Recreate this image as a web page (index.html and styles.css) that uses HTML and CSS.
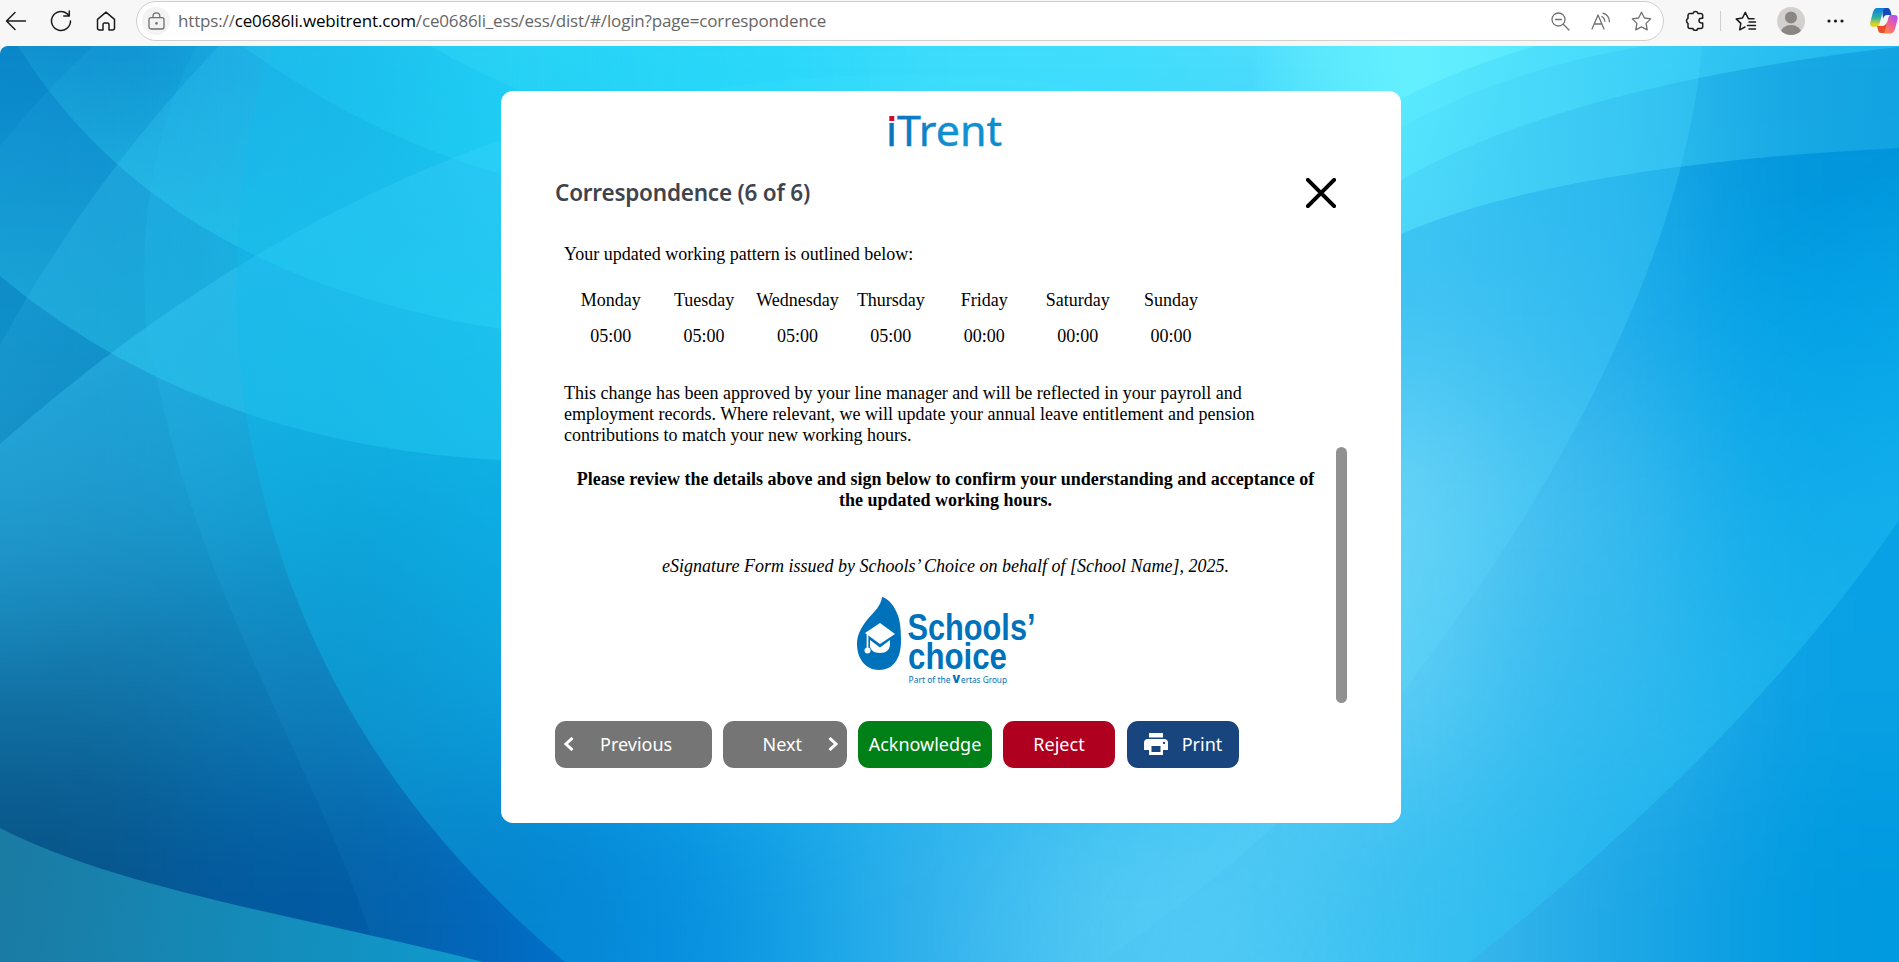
FILE: index.html
```html
<!DOCTYPE html>
<html lang="en">
<head>
<meta charset="utf-8">
<title>iTrent - Correspondence</title>
<link rel="stylesheet" href="styles.css">
</head>
<body>
<header class="toolbar">
  <nav class="nav-icons">
    <svg class="ico back" width="22" height="20" viewBox="0 0 22 20"><path d="M20.500 10H1.500M10 1.500L1.500 10l8.500 8.500"/></svg>
    <svg class="ico reload" width="22" height="22" viewBox="0 0 22 22"><path d="M20.500 11a9.500 9.500 0 1 1-3.500-7.400l2.300 2.200M19.300 1v5h-5.500"/></svg>
    <svg class="ico home" width="20" height="20" viewBox="0 0 20 20"><path d="M1.500 8.300L10 1.200l8.500 7.100V17a2 2 0 0 1-2 2H13v-5.500a1.500 1.500 0 0 0-1.500-1.500h-3A1.500 1.500 0 0 0 7 13.500V19H3.500a2 2 0 0 1-2-2z"/></svg>
  </nav>
  <div class="address">
    <span class="lock">
      <svg class="ico grey" width="17" height="18" viewBox="0 0 17 18"><rect x="1" y="5.700" width="15" height="11.300" rx="2"/><path d="M5 5.500V4.200a3.400 3.400 0 0 1 6.800 0v1.300"/><circle cx="8.500" cy="11.300" r=".7" fill="#666"/></svg>
    </span>
    <span class="url">https://<b>ce0686li.webitrent.com</b>/ce0686li_ess/ess/dist/#/login?page=correspondence</span>
    <span class="address-tools">
      <svg class="ico grey" width="19" height="19" viewBox="0 0 19 19"><circle cx="7.500" cy="7.500" r="6.500"/><path d="M12.300 12.300l5.700 5.700M4.500 7.500h6"/></svg>
      <svg class="ico grey" width="20" height="18" viewBox="0 0 20 18"><path d="M1 17L7 3l6 14M3.200 12h7.600M11 4.500c1.800 1 2.700 2.700 2.900 4.700M12 1.200c4 1.200 6.200 4.200 6.500 8.500"/></svg>
      <svg class="ico grey" width="21" height="20" viewBox="0 0 21 20"><path d="M10.500 1.200l2.900 5.800 6.300.9-4.600 4.500 1.100 6.400-5.700-3-5.700 3 1.100-6.400L1.300 7.900 7.600 7z"/></svg>
    </span>
  </div>
  <div class="actions">
    <svg class="ico puzzle" width="20" height="21" viewBox="0 0 20 21"><path d="M5 3.500h3a2.600 2.600 0 0 1 5 0h2.700a2 2 0 0 1 2 2v2.800h-1.400a2.200 2.200 0 0 0 0 4.600h1.400v3.600a2 2 0 0 1-2 2h-2.900a2.500 2.500 0 0 1-4.900 0H5a2 2 0 0 1-2-2v-3.200a2.800 2.800 0 0 1 0-5V5.500a2 2 0 0 1 2-2z"/></svg>
    <span class="divider"></span>
    <svg class="ico favs" width="22" height="20" viewBox="0 0 22 20"><path d="M19 7.800h-5.500L10.300 1.300 7.500 7l-6.300.9 4.600 4.500-1.100 6.400 5.300-2.800M14 11h6.500M12.500 14.500h8M14 18h6.500"/></svg>
    <svg class="avatar" width="28" height="28" viewBox="0 0 28 28"><defs><clipPath id="av"><circle cx="14" cy="14" r="14"/></clipPath></defs><g clip-path="url(#av)"><path fill="#d2d0ce" d="M0 0h28v28H0z"/><circle cx="14" cy="10.500" r="6" fill="#8a8684"/><ellipse cx="14" cy="25.500" rx="10" ry="7.500" fill="#8a8684"/></g></svg>
    <svg class="dots" width="17" height="4" viewBox="0 0 17 4"><circle cx="2" cy="2" r="1.600"/><circle cx="8.500" cy="2" r="1.600"/><circle cx="15" cy="2" r="1.600"/></svg>
    <svg class="copilot" width="28" height="26" viewBox="0 0 28 26">
      <defs>
        <linearGradient id="cp1" x1="0" y1="0" x2="0" y2="1"><stop offset="0" stop-color="#0a7fe0"/><stop offset=".5" stop-color="#2ab0a8"/><stop offset=".85" stop-color="#e0d020"/></linearGradient>
        <linearGradient id="cp2" x1=".8" y1="0" x2=".2" y2="1"><stop offset="0" stop-color="#b050f0"/><stop offset=".5" stop-color="#f0609a"/><stop offset="1" stop-color="#ff8a40"/></linearGradient>
      </defs>
      <path fill="#1848c0" d="M12 0h5.500c2 0 2.500 1.500 3 3l1 4h-4c-3 0-4 2-4.500 4z"/>
      <path fill="#e8502c" d="M7 18h5c3 0 4-2 4.500-4l1 6-2 5H11c-2 0-2.600-1.500-3-3z"/>
      <path fill="url(#cp1)" d="M7 0h8c-1.500 1-2 2.600-2.500 4.500L9.800 15c-.6 2.500-2 3.800-4.500 3.800H3C.6 18.800-.2 17 .3 14.500L2.700 5C3.700 1.500 5 0 7 0z"/>
      <path fill="url(#cp2)" d="M20 7h4.500c2.800 0 3.700 1.800 3 4.500L25.300 20c-1 3.600-2.500 5.500-5.300 5.500h-7c1.500-1 2-2.500 2.400-4.300L18 11c.5-2 1-3 2-4z"/>
    </svg>
  </div>
</header>

<main class="stage">
  <svg class="backdrop" viewBox="0 46 1899 916" preserveAspectRatio="none">
    <defs>
      <filter id="soft" x="-10%" y="-10%" width="120%" height="120%" color-interpolation-filters="sRGB"><feGaussianBlur stdDeviation="70"/></filter>
      <linearGradient id="gC" gradientUnits="userSpaceOnUse" x1="40" y1="90" x2="200" y2="300"><stop offset="0" stop-color="#30b8f0" stop-opacity=".12"/><stop offset="1" stop-color="#30b8f0" stop-opacity="0"/></linearGradient>
      <linearGradient id="gF" gradientUnits="userSpaceOnUse" x1="243" y1="0" x2="880" y2="0"><stop offset="0" stop-color="#30e8ff" stop-opacity=".2"/><stop offset=".4" stop-color="#30e8ff" stop-opacity=".28"/><stop offset="1" stop-color="#30e8ff" stop-opacity="0"/></linearGradient>
      <linearGradient id="gG" gradientUnits="userSpaceOnUse" x1="430" y1="0" x2="880" y2="0"><stop offset="0" stop-color="#50f0ff" stop-opacity=".2"/><stop offset="1" stop-color="#50f0ff" stop-opacity="0"/></linearGradient>
      <linearGradient id="gA" gradientUnits="userSpaceOnUse" x1="200" y1="250" x2="330" y2="560"><stop offset="0" stop-color="#4ad4ff" stop-opacity=".38"/><stop offset="1" stop-color="#2cc4f4" stop-opacity="0"/></linearGradient>
      <linearGradient id="gB" gradientUnits="userSpaceOnUse" x1="110" y1="170" x2="210" y2="330"><stop offset="0" stop-color="#4ad4ff" stop-opacity=".2"/><stop offset="1" stop-color="#4ad4ff" stop-opacity="0"/></linearGradient>
      <linearGradient id="gE" gradientUnits="userSpaceOnUse" x1="300" y1="440" x2="360" y2="100"><stop offset="0" stop-color="#38e4fc" stop-opacity=".34"/><stop offset="1" stop-color="#40e0ff" stop-opacity="0"/></linearGradient>
      <linearGradient id="gD" gradientUnits="userSpaceOnUse" x1="300" y1="275" x2="370" y2="60"><stop offset="0" stop-color="#38ecff" stop-opacity=".28"/><stop offset="1" stop-color="#40e4ff" stop-opacity="0"/></linearGradient>
      <linearGradient id="gH" gradientUnits="userSpaceOnUse" x1="150" y1="0" x2="800" y2="0"><stop offset="0" stop-color="#28c0f0" stop-opacity=".2"/><stop offset=".3" stop-color="#1c9cdc" stop-opacity=".1"/><stop offset="1" stop-color="#1c9ce4" stop-opacity="0"/></linearGradient>
      <linearGradient id="gI" gradientUnits="userSpaceOnUse" x1="240" y1="650" x2="800" y2="420"><stop offset="0" stop-color="#0cb8ec" stop-opacity=".45"/><stop offset="1" stop-color="#10c4f4" stop-opacity="0"/></linearGradient>
      <linearGradient id="gJ" gradientUnits="userSpaceOnUse" x1="0" y1="900" x2="480" y2="962"><stop offset="0" stop-color="#1a7ba3"/><stop offset="1" stop-color="#0f9acd"/></linearGradient>
      <linearGradient id="gN" gradientUnits="userSpaceOnUse" x1="1250" y1="0" x2="1899" y2="0"><stop offset="0" stop-color="#5ceaff" stop-opacity="0"/><stop offset=".23" stop-color="#5ceaff" stop-opacity=".5"/><stop offset="1" stop-color="#40d0f8" stop-opacity=".25"/></linearGradient>
      <linearGradient id="gM" gradientUnits="userSpaceOnUse" x1="1250" y1="0" x2="1899" y2="0"><stop offset="0" stop-color="#60f0ff" stop-opacity="0"/><stop offset=".23" stop-color="#60f0ff" stop-opacity=".38"/><stop offset="1" stop-color="#30d0ff" stop-opacity=".45"/></linearGradient>
      <linearGradient id="gL" gradientUnits="userSpaceOnUse" x1="1250" y1="0" x2="1645" y2="0"><stop offset="0" stop-color="#60f0ff" stop-opacity="0"/><stop offset=".4" stop-color="#60f0ff" stop-opacity=".32"/><stop offset="1" stop-color="#50e8ff" stop-opacity=".35"/></linearGradient>
      <linearGradient id="gK" gradientUnits="userSpaceOnUse" x1="1250" y1="0" x2="1535" y2="0"><stop offset="0" stop-color="#70f8ff" stop-opacity="0"/><stop offset=".6" stop-color="#70f8ff" stop-opacity=".45"/><stop offset="1" stop-color="#70f8ff" stop-opacity=".35"/></linearGradient>
      <linearGradient id="gO" gradientUnits="userSpaceOnUse" x1="1680" y1="0" x2="920" y2="0"><stop offset="0" stop-color="#50dcff" stop-opacity=".26"/><stop offset=".6" stop-color="#70e8ff" stop-opacity=".1"/><stop offset="1" stop-color="#70e8ff" stop-opacity="0"/></linearGradient>
      <linearGradient id="gP" gradientUnits="userSpaceOnUse" x1="1780" y1="690" x2="1560" y2="380"><stop offset="0" stop-color="#30d0fa" stop-opacity=".34"/><stop offset="1" stop-color="#30d0fa" stop-opacity="0"/></linearGradient>
      <linearGradient id="gX" gradientUnits="userSpaceOnUse" x1="900" y1="0" x2="1450" y2="0"><stop offset="0" stop-color="#fff" stop-opacity="0"/><stop offset="1" stop-color="#fff"/></linearGradient>
      <mask id="mP" maskUnits="userSpaceOnUse" x="900" y="46" width="999" height="916"><path fill="url(#gX)" d="M900 46h999v916H900z"/></mask>
    </defs>
    <g filter="url(#soft)">
      <rect x="-200" y="-100" width="2300" height="1300" fill="#20b8ee"/>
      <rect x="-200" y="-100" width="411" height="329" fill="#0885c8"/>
      <rect x="211" y="-100" width="211" height="329" fill="#10b0e2"/>
      <rect x="422" y="-100" width="211" height="329" fill="#1acbf2"/>
      <rect x="633" y="-100" width="211" height="329" fill="#24d4f8"/>
      <rect x="844" y="-100" width="361" height="329" fill="#3cdcfc"/>
      <rect x="1205" y="-100" width="261" height="260" fill="#4cdcfc"/>
      <rect x="1466" y="-100" width="222" height="329" fill="#20b0ea"/>
      <rect x="1688" y="-100" width="400" height="329" fill="#0294da"/>
      <rect x="-200" y="229" width="411" height="183" fill="#0c8cc6"/>
      <rect x="211" y="229" width="211" height="183" fill="#0eacdc"/>
      <rect x="422" y="229" width="211" height="183" fill="#14bce8"/>
      <rect x="1300" y="229" width="200" height="183" fill="#40bff1"/>
      <rect x="1500" y="229" width="188" height="183" fill="#28b0ec"/>
      <rect x="1688" y="229" width="400" height="183" fill="#009fe6"/>
      <rect x="-200" y="412" width="411" height="130" fill="#1b93c8"/>
      <rect x="211" y="412" width="211" height="183" fill="#0c9cd0"/>
      <rect x="422" y="412" width="211" height="183" fill="#0aaae0"/>
      <rect x="1250" y="412" width="238" height="183" fill="#6cd2f6"/>
      <rect x="1488" y="412" width="200" height="183" fill="#40baee"/>
      <rect x="1688" y="412" width="400" height="183" fill="#08a2e6"/>
      <rect x="-200" y="542" width="411" height="120" fill="#1885ba"/>
      <rect x="-200" y="662" width="411" height="110" fill="#116ea0"/>
      <rect x="211" y="595" width="211" height="184" fill="#0d7cb8"/>
      <rect x="422" y="595" width="211" height="184" fill="#0a98d8"/>
      <rect x="1250" y="595" width="238" height="184" fill="#66cff6"/>
      <rect x="1488" y="595" width="222" height="184" fill="#36b4ec"/>
      <rect x="1710" y="595" width="400" height="184" fill="#0aa0e4"/>
      <rect x="-200" y="772" width="361" height="400" fill="#075488"/>
      <rect x="161" y="779" width="261" height="400" fill="#025aa0"/>
      <rect x="422" y="779" width="150" height="400" fill="#0062ba"/>
      <rect x="572" y="779" width="161" height="400" fill="#007cd8"/>
      <rect x="733" y="779" width="140" height="400" fill="#189ee4"/>
      <rect x="873" y="779" width="170" height="400" fill="#38b6ee"/>
      <rect x="1043" y="779" width="300" height="400" fill="#54c8f4"/>
      <rect x="1343" y="779" width="200" height="400" fill="#3ab8ec"/>
      <rect x="1543" y="779" width="180" height="400" fill="#1ca6e6"/>
      <rect x="1723" y="779" width="400" height="400" fill="#009ae0"/>
    </g>
    <path fill="url(#gC)" d="M0 146Q45 90 93 46H600V500H0z"/>
    <path fill="url(#gB)" d="M0 345Q90 180 219 46H700V500L0 600z"/>
    <path fill="url(#gA)" d="M0 444Q240 232 501 140L700 90V760H0z"/>
    <path fill="url(#gE)" d="M0 276Q200 444 501 460V46H0z"/>
    <path fill="url(#gD)" d="M18 46Q160 275 501 329V46z"/>
    <path fill="url(#gF)" d="M243 46Q365 135 501 174H900V46z"/>
    <path fill="url(#gG)" d="M430 46Q480 74 520 90H900V46z"/>
    <path fill="url(#gH)" d="M197 46C130 170 140 330 155 370C200 600 320 770 380 962H900V46z"/>
    <path fill="url(#gI)" d="M272 46C225 190 235 340 245 407C285 660 410 830 565 962H900V46z"/>
    <path fill="url(#gJ)" d="M0 828C120 890 320 920 483 962H0z"/>
    <path fill="#50ecff" fill-opacity=".1" d="M600 110Q950 30 1260 130H600z"/>
    <g mask="url(#mP)"><path fill="url(#gP)" d="M1899 520Q1750 740 1470 962H900V46H1899z"/></g>
    <path fill="url(#gO)" d="M1702 46C1685 250 1560 490 1401 694Q1290 830 1102 962H900V46z"/>
    <path fill="url(#gN)" d="M1250 300L1401 234Q1560 165 1899 148V46H1250z"/>
    <path fill="url(#gM)" d="M1250 270L1401 180Q1570 84 1899 47V46H1250z"/>
    <path fill="url(#gL)" d="M1250 210L1401 127Q1510 68 1645 46H1250z"/>
    <path fill="url(#gK)" d="M1250 170L1401 99Q1460 68 1535 46H1250z"/>
  </svg>

  <section class="card">
    <svg class="brand" width="120" height="40" viewBox="0 0 120 40">
      <defs><linearGradient id="br" x1="0" x2="1"><stop offset="0" stop-color="#0a6fbc"/><stop offset=".6" stop-color="#1193d3"/><stop offset="1" stop-color="#0a8ccd"/></linearGradient></defs>
      <text class="brand-text" x="0" y="34.500" textLength="116" lengthAdjust="spacingAndGlyphs" fill="url(#br)" stroke="url(#br)" stroke-width=".4">iTrent</text>
      <rect x="1" y="0" width="9" height="11.500" fill="#fff"/>
      <rect x="3.300" y="5" width="5" height="5" fill="#c8102e"/>
    </svg>
    <div class="head">
      <h1>Correspondence (6 of 6)</h1>
      <svg class="close" width="30" height="30" viewBox="0 0 30 30"><path d="M.5 .5l29 29M29.500 .5l-29 29"/></svg>
    </div>
    <div class="scroll">
      <div class="letter">
        <p class="intro">Your updated working pattern is outlined below:</p>
        <div class="pattern">
          <span>Monday</span><span>Tuesday</span><span>Wednesday</span><span>Thursday</span><span>Friday</span><span>Saturday</span><span>Sunday</span>
          <span>05:00</span><span>05:00</span><span>05:00</span><span>05:00</span><span>00:00</span><span>00:00</span><span>00:00</span>
        </div>
        <p class="change">This change has been approved by your line manager and will be reflected in your payroll and<br>employment records. Where relevant, we will update your annual leave entitlement and pension<br>contributions to match your new working hours.</p>
        <p class="review">Please review the details above and sign below to confirm your understanding and acceptance of<br>the updated working hours.</p>
        <p class="issued">eSignature Form issued by Schools’ Choice on behalf of [School Name], 2025.</p>
        <svg class="logo" width="180" height="90" viewBox="0 0 180 90">
          <path fill="#0072bc" d="M26 0c-1 9-8 15-15 23C4 32 1 39 1 47c0 15 9 26 22 26 14 0 22-11 22-29 0-14-1-22-5-30C37 7 31 1 26 0z"/>
          <path fill="#fff" d="M9 36L24 26l15 11-15 10z"/>
          <path fill="#fff" d="M14 43l10 7.500L34 43v4c0 6-4 9-10 9s-9-3-10-6z"/>
          <path fill="none" stroke="#fff" stroke-width="1.700" d="M11.500 37v15"/>
          <circle cx="11.500" cy="53.500" r="3" fill="#fff"/>
          <g fill="#0072bc" class="logo-big">
            <text x="51.500" y="42.500" textLength="128" lengthAdjust="spacingAndGlyphs">Schools’</text>
            <text x="52" y="71.500" textLength="99" lengthAdjust="spacingAndGlyphs">choice</text>
          </g>
          <g fill="#0072bc" class="logo-small">
            <text x="52.500" y="86" textLength="42" lengthAdjust="spacingAndGlyphs">Part of the</text>
            <text x="96.500" y="86" class="vee">V</text>
            <text x="105" y="86" textLength="46" lengthAdjust="spacingAndGlyphs">ertas Group</text>
          </g>
        </svg>
      </div>
      <span class="thumb"></span>
    </div>
    <div class="buttons">
      <button class="btn grey-btn prev"><svg width="10" height="14" viewBox="0 0 10 14"><path d="M8.500 1L2 7l6.500 6"/></svg><span>Previous</span></button>
      <button class="btn grey-btn next"><span>Next</span><svg width="10" height="14" viewBox="0 0 10 14"><path d="M1.500 1L8 7l-6.500 6"/></svg></button>
      <button class="btn ack">Acknowledge</button>
      <button class="btn reject">Reject</button>
      <button class="btn print"><svg class="printer" width="24" height="22" viewBox="0 0 24 22"><path fill="#fff" stroke="none" fill-rule="evenodd" d="M5 0h14v4.500H5zM4 6h16a4 4 0 0 1 4 4v7h-5v5H5v-5H0v-7a4 4 0 0 1 4-4zM7.500 13v6h9v-6zM20 8.700a1.200 1.200 0 1 0 .01 0z"/></svg><span>Print</span></button>
    </div>
  </section>
</main>
</body>
</html>
```
FILE: styles.css
```css
* { box-sizing: border-box; }
body { margin: 0; width: 1899px; height: 962px; overflow: hidden; background: #f7f7f7; font-family: "Noto Sans", "Open Sans", sans-serif; }

.toolbar { height: 46px; display: flex; align-items: flex-start; background: #f7f7f7; }
.ico { fill: none; stroke: #1b1b1b; stroke-width: 1.5; stroke-linejoin: round; stroke-linecap: round; flex: none; }
.ico.grey { stroke: #707070; stroke-width: 1.3; }
.nav-icons { display: flex; align-items: center; width: 136px; height: 41px; padding-left: 5px; }
.reload { margin-left: 23px; }
.home { margin-left: 24px; }
.address { width: 1528px; height: 40px; margin-top: 1px; border: 1.5px solid #d0d0d0; border-radius: 20px; background: #fff; display: flex; align-items: center; padding: 0 11px 0 5px; }
.lock { width: 28px; height: 28px; border-radius: 50%; background: #f3f3f3; display: flex; align-items: center; justify-content: center; }
.url { margin-left: 8px; font: 17px/24px "Open Sans", "Noto Sans", sans-serif; letter-spacing: -0.16px; color: #666; white-space: nowrap; }
.url b { font-weight: 400; color: #000; }
.address-tools { display: flex; align-items: center; gap: 20.5px; margin-left: auto; }
.actions { height: 41px; display: flex; align-items: center; }
.puzzle { margin-left: 21px; }
.divider { width: 1px; height: 20px; background: #cfcfcf; margin-left: 15px; }
.favs { margin-left: 14px; }
.avatar { margin-left: 20px; flex: none; }
.dots { margin-left: 22px; fill: #1b1b1b; flex: none; }
.copilot { margin-left: 26px; flex: none; }

.stage { position: relative; height: 916px; padding: 45px 0 0 501px; overflow: hidden; border-radius: 8px 0 0 0; }
.backdrop { position: absolute; inset: 0; width: 1899px; height: 916px; }

.card { position: relative; width: 900px; height: 732px; background: #fff; border-radius: 12px; padding: 20px 54px 0; display: flex; flex-direction: column; }
.brand { margin-left: 331px; flex: none; overflow: visible; }
.brand-text { font: 41px "Noto Sans", sans-serif; }
.head { height: 64px; margin-top: 10px; display: flex; align-items: center; justify-content: space-between; padding-right: 11px; }
h1 { margin: 0; font: 600 22.5px/30px "Noto Sans", "Open Sans", sans-serif; color: #3f444d; letter-spacing: -0.22px; white-space: nowrap; }
.close { fill: none; stroke: #000; stroke-width: 4; }
.scroll { display: flex; height: 479px; }
.letter { width: 781px; padding: 19px 9px 0; font: 18px/21px "Liberation Serif", "Times New Roman", serif; color: #000; }
.letter p { margin: 0; white-space: nowrap; }
.pattern { display: grid; grid-template-columns: repeat(7, 93.4px); row-gap: 15px; margin-top: 25px; text-align: center; }
.letter .change { margin-top: 36px; }
.letter .review { margin-top: 23px; text-align: center; font-weight: 700; }
.letter .issued { margin-top: 45px; text-align: center; font-style: italic; }
.logo { display: block; margin: 20px 0 0 292px; overflow: visible; }
.logo-big { font: 700 37.5px "Liberation Sans", Arial, sans-serif; }
.logo-small { font: 9.5px "Noto Sans", sans-serif; }
.vee { font-weight: 900; font-size: 11px; }
.thumb { width: 11px; height: 256px; margin-top: 222px; border-radius: 6px; background: #919191; }
.buttons { display: flex; gap: 11px; margin-top: 17px; }
.btn { height: 47px; border: 0; border-radius: 11px; padding: 0 0 1px; color: #fff; font: 18px/24px "Noto Sans", "Open Sans", sans-serif; display: flex; align-items: center; justify-content: center; }
.btn svg { fill: none; stroke: #fff; stroke-width: 3; }
.grey-btn { background: #757575; }
.prev { width: 157px; justify-content: flex-start; padding-left: 9px; gap: 26px; }
.next { width: 124px; justify-content: flex-end; padding-right: 9px; gap: 26px; }
.ack { width: 134px; background: #008017; }
.reject { width: 112px; background: #b00020; }
.print { width: 112px; background: #19457e; gap: 14px; margin-left: 1px; }
```
